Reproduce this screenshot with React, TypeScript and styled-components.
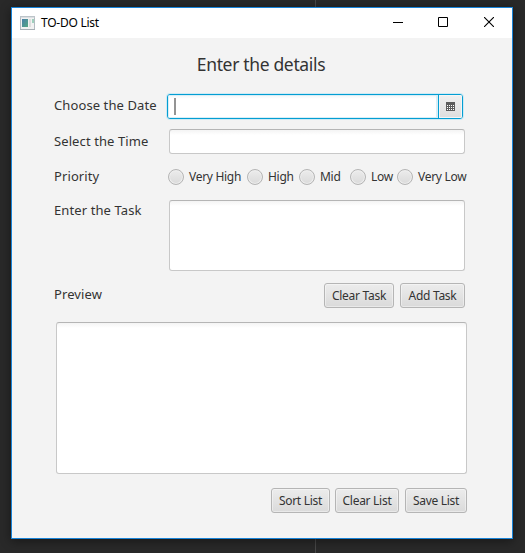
import React from "react";
import styled, { createGlobalStyle } from "styled-components";

const GlobalStyle = createGlobalStyle`
  * { box-sizing: border-box; }
  html, body { margin: 0; padding: 0; }
  body { background: #292929; overflow: hidden; }
`;

const Desktop = styled.main`
  width: 525px;
  height: 553px;
  padding: 7px 12px 14px 11px;
  background: linear-gradient(#484848, #484848) 315px 0 / 1px 100% no-repeat #292929;
  font-family: "Noto Sans", "Open Sans", sans-serif;
  color: #333;
`;

const Window = styled.section`
  width: 502px;
  height: 532px;
  border: 1px solid #1883d7;
  background: #f3f3f3;
  box-shadow: 0 2px 10px rgba(0, 0, 0, 0.45);
`;

const TitleBar = styled.header`
  display: flex;
  align-items: center;
  height: 30px;
  padding-left: 8px;
  background: #fff;
`;

const Title = styled.span`
  flex: 1;
  margin-left: 6px;
  padding-bottom: 1px;
  font-size: 12px;
  letter-spacing: -0.25px;
  color: #000;
`;

const Control = styled.button`
  display: grid;
  place-items: center;
  width: 46px;
  height: 30px;
  padding: 0 0 2px;
  border: 0;
  background: none;

  &:first-of-type {
    width: 44px;
  }
`;

const Content = styled.div`
  height: 500px;
  padding: 13px 0 0 42px;
`;

const Heading = styled.h1`
  width: 414px;
  height: 43px;
  margin: 0;
  line-height: 26px;
  font-size: 17.5px;
  font-weight: 400;
  letter-spacing: -0.34px;
  text-align: center;
`;

const Row = styled.div<{ $height: number; $indent?: number }>`
  display: flex;
  height: ${(p) => p.$height}px;
  padding-left: ${(p) => p.$indent ?? 0}px;
`;

const Label = styled.label<{ $shift?: number }>`
  width: 115px;
  flex: none;
  margin-top: ${(p) => p.$shift ?? 0}px;
  line-height: 22px;
  font-size: 13px;
  white-space: nowrap;
  letter-spacing: 0.1px;
`;

const Field = styled.div<{ $width: number; $height: number }>`
  width: ${(p) => p.$width}px;
  height: ${(p) => p.$height}px;
  border: 1px solid #c8c8c8;
  border-top-color: #b5b5b5;
  border-radius: 3px;
  background: linear-gradient(#f4f4f4, #fff 5px);
`;

const DatePicker = styled.div`
  display: flex;
  width: 296px;
  height: 25px;
  margin-left: -2px;
  border: 1px solid #039ed3;
  border-radius: 3px;
  box-shadow: 0 0 0 1px #cfeaf4;
  overflow: hidden;
`;

const DateInput = styled.div`
  flex: 1;
  padding: 2px 0 0 5px;
  border: 1px solid #d9eef6;
  border-right-width: 2px;
  background: linear-gradient(#f4f8fa, #fff 3px);
`;

const Caret = styled.div`
  width: 2px;
  height: 17px;
  background: #949494;
`;

const DateButton = styled.button`
  display: grid;
  place-items: center;
  width: 24px;
  padding: 0;
  border: 0;
  border-left: 1px solid #039ed3;
  background: linear-gradient(#f0f0f0, #dedede);
  box-shadow: inset 0 0 0 1px #f5f5f5;
`;

const RadioGroup = styled.div`
  display: grid;
  grid-template-columns: 79px 52px 51px 47px 70px;
  margin-left: -1px;
`;

const Radio = styled.label`
  display: flex;
  height: 16px;
  align-items: center;
  gap: 5px;
  font-size: 12px;
  line-height: 16px;
  white-space: nowrap;
  letter-spacing: -0.3px;
`;

const Dot = styled.span`
  flex: none;
  width: 16px;
  height: 16px;
  border: 1px solid #b5b5b5;
  border-radius: 50%;
  background: linear-gradient(#ececec, #dadada);
  box-shadow: inset 0 0 0 1px #eee;
`;

const ButtonBar = styled.div<{ $width: number }>`
  display: flex;
  justify-content: flex-end;
  width: ${(p) => p.$width}px;
`;

const Button = styled.button<{ $width: number; $gap?: number }>`
  width: ${(p) => p.$width}px;
  height: 25px;
  margin-left: ${(p) => p.$gap ?? 0}px;
  padding: 0;
  border: 1px solid #b5b5b5;
  border-radius: 3px;
  background: linear-gradient(#ececec, #dadada);
  box-shadow: inset 0 0 0 1px rgba(255, 255, 255, 0.4);
  font: 12px "Noto Sans", sans-serif;
  letter-spacing: -0.28px;
  color: #333;
  white-space: nowrap;
`;

const AppIcon = () => (
  <svg width="15" height="14" viewBox="0 0 15 14">
    <defs>
      <linearGradient id="tile" x1="0" y1="0" x2="1" y2="1">
        <stop offset="0" stopColor="#4a7fa8" />
        <stop offset="1" stopColor="#55a884" />
      </linearGradient>
    </defs>
    <rect x=".5" y=".5" width="14" height="13" fill="#f2f2f2" stroke="#b4bcc2" />
    <path d="M0 1h15" stroke="#c5ccd1" />
    <rect x="2" y="3" width="6" height="8" fill="url(#tile)" />
    <rect x="9" y="3" width="2" height="8" fill="#dedede" />
    <rect x="12" y="3" width="2" height="4" fill="#9fd0bd" />
    <path d="M0 13.5h15" stroke="#a7afb5" />
  </svg>
);

const CalendarIcon = () => (
  <svg width="9" height="9" viewBox="0 0 9 9" shapeRendering="crispEdges">
    <rect width="9" height="9" fill="#5c5c5c" />
    {[3, 5, 7].map((y) =>
      [1, 3, 5, 7].map((x) => <rect key={`${x}-${y}`} x={x} y={y} width="1" height="1" fill="#fff" />)
    )}
  </svg>
);

const priorities = ["Very High", "High", "Mid", "Low", "Very Low"];

export default function App() {
  return (
    <>
      <GlobalStyle />
      <Desktop>
        <Window>
          <TitleBar>
            <AppIcon />
            <Title>TO-DO List</Title>
            <Control aria-label="Minimize">
              <svg width="10" height="10"><path d="M0 5.5h10" stroke="#000" /></svg>
            </Control>
            <Control aria-label="Maximize">
              <svg width="10" height="10"><path d="M.5.5h9v9h-9z" fill="none" stroke="#000" /></svg>
            </Control>
            <Control aria-label="Close">
              <svg width="10" height="10"><path d="M0 0l10 10M10 0L0 10" stroke="#000" strokeWidth="1.1" /></svg>
            </Control>
          </TitleBar>
          <Content>
            <Heading>Enter the details</Heading>
            <Row $height={35}>
              <Label>Choose the Date</Label>
              <DatePicker>
                <DateInput><Caret /></DateInput>
                <DateButton aria-label="Open calendar"><CalendarIcon /></DateButton>
              </DatePicker>
            </Row>
            <Row $height={40}>
              <Label $shift={1}>Select the Time</Label>
              <Field $width={296} $height={25} />
            </Row>
            <Row $height={31}>
              <Label $shift={-4}>Priority</Label>
              <RadioGroup>
                {priorities.map((name) => (
                  <Radio key={name}><Dot />{name}</Radio>
                ))}
              </RadioGroup>
            </Row>
            <Row $height={83}>
              <Label $shift={-1}>Enter the Task</Label>
              <Field $width={296} $height={71} />
            </Row>
            <Row $height={39}>
              <Label>Preview</Label>
              <ButtonBar $width={296}>
                <Button $width={70}>Clear Task</Button>
                <Button $width={65} $gap={6}>Add Task</Button>
              </ButtonBar>
            </Row>
            <Row $height={166} $indent={2}>
              <Field $width={411} $height={152} />
            </Row>
            <ButtonBar $width={413}>
              <Button $width={59}>Sort List</Button>
              <Button $width={64} $gap={5}>Clear List</Button>
              <Button $width={62} $gap={6}>Save List</Button>
            </ButtonBar>
          </Content>
        </Window>
      </Desktop>
    </>
  );
}
